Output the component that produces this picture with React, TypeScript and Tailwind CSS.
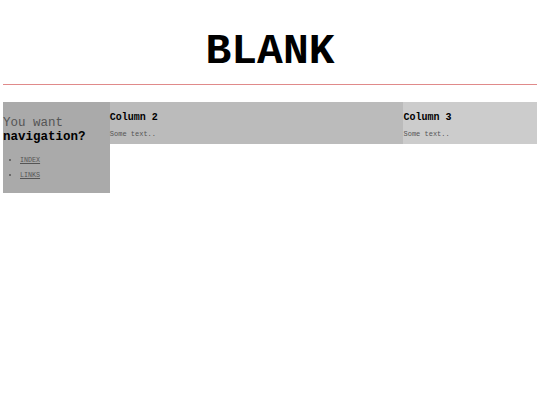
import React from "react";

const mono = { fontFamily: '"Liberation Mono", "Courier New", monospace' };

export default function App() {
  return (
    <div className="min-h-[405px] bg-white px-[3px]" style={mono}>
      <header className="h-[84px] pt-[30px] text-center">
        <h1 className="text-[43px] font-bold leading-none text-black">BLANK</h1>
      </header>
      <div className="h-px bg-[#e08a8a]" />
      <div className="mt-[17px] flex items-start">
        <nav className="w-[20%] bg-[#aaaaaa] pt-[14px] pb-[10px]">
          <h2 className="text-[12.5px] leading-[14px] text-[#555555]">
            You want <b className="text-black">navigation?</b>
          </h2>
          <ul className="mt-[9px] list-disc pl-[17px] text-[6.7px] leading-[15px] text-[#555555]">
            <li>
              <a href="#" className="underline">INDEX</a>
            </li>
            <li>
              <a href="#" className="underline">LINKS</a>
            </li>
          </ul>
        </nav>
        <section className="w-[55%] bg-[#bbbbbb] pt-[10px] pb-[6px]">
          <h3 className="text-[10px] font-bold leading-[12px] text-black">Column 2</h3>
          <p className="mt-[6px] text-[7px] leading-[8px] text-[#555555]">Some text..</p>
        </section>
        <section className="w-[25%] bg-[#cccccc] pt-[10px] pb-[6px]">
          <h3 className="text-[10px] font-bold leading-[12px] text-black">Column 3</h3>
          <p className="mt-[6px] text-[7px] leading-[8px] text-[#555555]">Some text..</p>
        </section>
      </div>
    </div>
  );
}
